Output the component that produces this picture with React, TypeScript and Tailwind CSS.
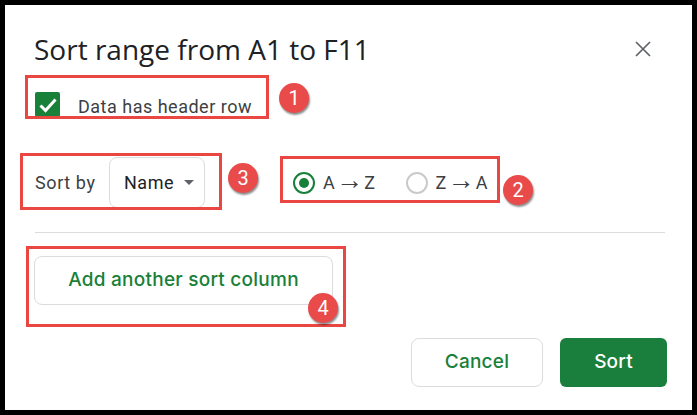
import React from 'react';

const Radio = ({ checked, from, to }: { checked?: boolean; from: string; to: string }) => (
  <div className="flex items-center gap-[8px]">
    <div className={`flex h-[22px] w-[22px] items-center justify-center rounded-full border-2 ${checked ? 'border-[#188038]' : 'border-[#c8cacc]'}`}>
      {checked && <div className="h-[10px] w-[10px] rounded-full bg-[#188038]" />}
    </div>
    <span className="text-[18px] leading-[22px] tracking-[0.4px] text-[#3c4043]">
      {from} <span className="-mx-[4px] font-['Liberation_Sans',sans-serif] text-[27px] leading-[0] font-light">→</span> {to}
    </span>
  </div>
);

const Note = ({ className }: { className: string }) => (
  <div className={`pointer-events-none absolute border-[3px] border-[#ea4743] ${className}`} />
);

const Badge = ({ n, className }: { n: number; className: string }) => (
  <div className={`absolute flex h-[30px] w-[30px] items-center justify-center rounded-full bg-[#e94a4a] text-[20px] text-white shadow-[1px_2px_2px_rgba(0,0,0,0.45)] ${className}`}>
    {n}
  </div>
);

export default function App() {
  return (
    <div className="relative h-[415px] w-[697px] overflow-hidden border-[5px] border-black bg-white font-['Roboto',sans-serif]">
      <div className="flex h-full flex-col px-[29px] pt-[25px]">
        {/* Header */}
        <div className="flex h-[38px] items-center justify-between">
          <h1 className="font-['Open_Sans',sans-serif] text-[28px] leading-[38px] text-[#202124]">Sort range from A1 to F11</h1>
          <svg className="mr-[12px] h-[16px] w-[16px]" viewBox="0 0 16 16" fill="none" stroke="#5f6368" strokeWidth="1.7">
            <path d="M1 1l14 14M15 1L1 15" />
          </svg>
        </div>

        {/* Header row checkbox */}
        <div className="mt-[24px] flex h-[25px] items-center">
          <div className="ml-[1px] flex h-[25px] w-[25px] items-center justify-center rounded-[2px] bg-[#188038]">
            <svg className="h-[20px] w-[20px]" viewBox="0 0 20 20" fill="none" stroke="white" strokeWidth="3">
              <path d="M2.5 10.5l5 5L17.5 4.5" />
            </svg>
          </div>
          <span className="ml-[18px] mt-[4px] text-[18px] leading-[24px] tracking-[0.5px] text-[#3c4043]">Data has header row</span>
        </div>

        {/* Sort options */}
        <div className="mt-[40px] flex h-[51px] items-center">
          <span className="ml-[1px] w-[74px] text-[18px] tracking-[0.6px] text-[#3c4043]">Sort by</span>
          <div className="flex h-[51px] w-[96px] items-center rounded-[8px] border border-[#dadce0] pl-[14px]">
            <span className="text-[18px] tracking-[0.5px] text-[#202124]">Name</span>
            <div className="ml-[10px] h-0 w-0 border-x-[5px] border-t-[5px] border-x-transparent border-t-[#5f6368]" />
          </div>
          <div className="ml-[88px] flex items-center gap-[30px]">
            <Radio checked from="A" to="Z" />
            <Radio from="Z" to="A" />
          </div>
        </div>

        <div className="ml-[1px] mt-[24px] h-px w-[630px] bg-[#dadce0]" />

        <button className="mt-[23px] h-[49px] w-[299px] rounded-[8px] border border-[#dadce0] font-['Inter',sans-serif] text-[19px] font-medium tracking-[0.25px] text-[#188038]">
          Add another sort column
        </button>

        {/* Footer */}
        <div className="-mr-[4px] mt-[33px] flex justify-end gap-[17px]">
          <button className="h-[49px] w-[132px] rounded-[8px] border border-[#dadce0] font-['Inter',sans-serif] text-[19px] font-medium tracking-[0.2px] text-[#188038]">Cancel</button>
          <button className="h-[49px] w-[107px] rounded-[6px] bg-[#1a7f3c] font-['Inter',sans-serif] text-[19px] font-medium tracking-[0.2px] text-white">Sort</button>
        </div>
      </div>

      {/* Annotations */}
      <Note className="left-[20px] top-[70px] h-[44px] w-[244px]" />
      <Note className="left-[15px] top-[148px] h-[57px] w-[202px]" />
      <Note className="left-[275px] top-[151px] h-[47px] w-[220px]" />
      <Note className="left-[21px] top-[241px] h-[81px] w-[320px]" />
      <Badge n={1} className="left-[274px] top-[78px]" />
      <Badge n={3} className="left-[223px] top-[158px]" />
      <Badge n={2} className="left-[498px] top-[170px]" />
      <Badge n={4} className="left-[303px] top-[288px]" />
    </div>
  );
}
